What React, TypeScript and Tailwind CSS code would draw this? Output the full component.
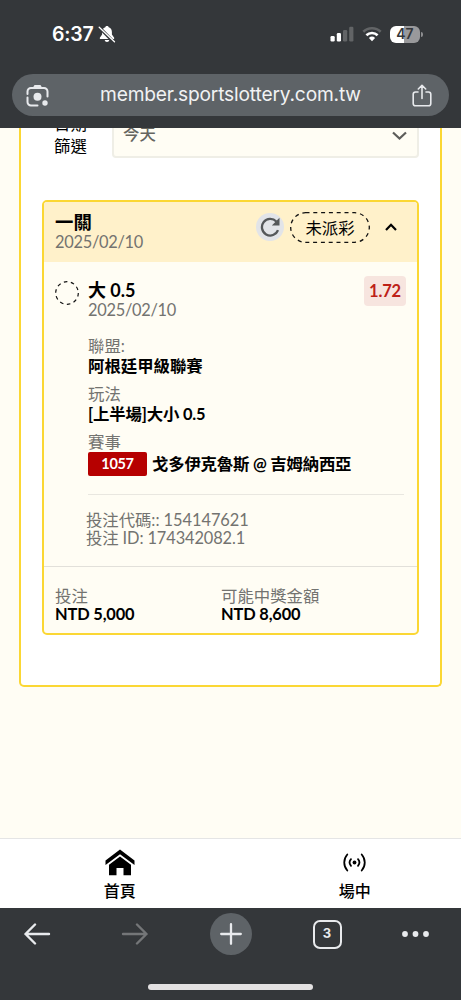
import type { ReactNode } from "react";

type DetailProps = {
  label: string;
  children: ReactNode;
};

function StatusBar() {
  return (
    <div className="flex h-[74px] items-start justify-between pl-[52px] pr-[38px] pt-[22px] text-white">
      <div className="flex h-6 items-center">
        <span className="w-[43px] whitespace-nowrap text-[19.5px] font-semibold leading-6 tracking-[-0.2px]">
          6:37
        </span>
        <svg className="ml-[3px] h-[18px] w-[18px]" viewBox="0 0 18 18">
          <path
            d="M9 1c-.9 0-1.500.5-1.700 1.200C5.100 2.900 4.100 4.700 4.100 7v2.500L2 12.500c-.5.8-.2 1.500.7 1.500h12.600c.9 0 1.200-.7.7-1.500L13.900 9.500V7c0-2.300-1-4.100-3.200-4.800C10.500 1.500 9.900 1 9 1ZM6.700 15h4.600c-.2 1.300-1.100 2-2.300 2s-2.100-.7-2.300-2Z"
            fill="currentColor"
          />
          <path d="M1.500 2.700 15.500 16.800" stroke="#34373a" strokeWidth="3.200" />
          <path d="m1.200 2.200 15.300 14.600" stroke="currentColor" strokeWidth="1.300" strokeLinecap="round" />
        </svg>
      </div>
      <div className="flex h-6 items-center">
        <svg className="h-4 w-6" viewBox="0 0 24 16" fill="#fff">
          <rect x="0.500" y="10" width="4.200" height="5.500" rx="1.200" />
          <rect x="6.800" y="7" width="4.200" height="8.500" rx="1.200" />
          <rect x="13" y="4" width="4.200" height="11.500" rx="1.200" fill="#626466" />
          <rect x="19.200" y="0.800" width="4.200" height="14.700" rx="1.200" fill="#626466" />
        </svg>
        <svg className="ml-2 h-4 w-5" viewBox="0 0 20 16" fill="none">
          <path d="M1.300 5.800a12.500 12.500 0 0 1 17.400 0" stroke="#626466" strokeWidth="2.600" />
          <path d="M4.400 9.200a8.200 8.200 0 0 1 11.200 0" stroke="#fff" strokeWidth="2.600" />
          <path d="M10 15.200 6.900 12a4.500 4.500 0 0 1 6.200 0Z" fill="#fff" />
        </svg>
        <div className="ml-[8px] flex h-[17px] w-[30px] items-center justify-center rounded-[6px] bg-linear-to-r from-white from-47% to-[#99999b] to-47% text-[14px] font-semibold leading-none text-[#34373a]">
          47
        </div>
        <span className="ml-px h-[5px] w-[2px] rounded-r-full bg-[#8d8e90]" />
      </div>
    </div>
  );
}

function AddressBar() {
  return (
    <div className="mx-3 flex h-[42px] items-center justify-between rounded-full bg-[#5e6367] pl-[14px] pr-[17px] text-[#e8eaed]">
      <svg className="h-[23px] w-[23px]" viewBox="0 0 23 23" fill="none" stroke="currentColor" strokeWidth="2">
        <path d="M1.500 10V7.500a3.500 3.500 0 0 1 3.500-3.500h13a3.500 3.500 0 0 1 3.500 3.500v5M1.500 13.500V18A3.500 3.500 0 0 0 5 21.500h6.500" strokeLinecap="round" />
        <path d="M7 3.500 8.500 1h6L16 3.500Z" fill="currentColor" stroke="none" />
        <circle cx="11.500" cy="12.800" r="4" fill="currentColor" stroke="none" />
        <circle cx="19" cy="19" r="2.700" fill="currentColor" stroke="none" />
      </svg>
      <span className="w-[261px] whitespace-nowrap text-[19.2px] leading-none tracking-[-0.18px] text-[#f1f2f3]">
        member.sportslottery.com.tw
      </span>
      <svg
        className="h-[23px] w-5"
        viewBox="0 0 20 23"
        fill="none"
        stroke="currentColor"
        strokeWidth="1.600"
        strokeLinecap="round"
        strokeLinejoin="round"
      >
        <path d="M6 8H3.500A2.300 2.300 0 0 0 1.200 10.300v9.200a2.300 2.300 0 0 0 2.300 2.300h13a2.300 2.300 0 0 0 2.300-2.300v-9.200A2.300 2.300 0 0 0 16.500 8H14M10 14.500V1.500M6.300 5 10 1.300 13.700 5" />
      </svg>
    </div>
  );
}

function Detail({ label, children }: DetailProps) {
  return (
    <div className="leading-5">
      <p className="text-[#737370]">{label}</p>
      <div className="font-bold">{children}</div>
    </div>
  );
}

function Amount({ label, value }: { label: string; value: string }) {
  return (
    <div className="w-[166px] leading-[18px]">
      <p className="text-[#737370]">{label}</p>
      <p className="font-bold tracking-[-0.15px]">{value}</p>
    </div>
  );
}

function BetCard() {
  return (
    <article className="mt-[42px] h-[435px] overflow-hidden rounded-[5px] border-2 border-[#fbd734] bg-[#fffdf4]">
      <header className="flex h-[60px] items-center bg-[#fff1ca] pl-[11px]">
        <div className="-mt-px w-[201px] leading-[19px]">
          <h2 className="text-[18.4px] font-bold">一關</h2>
          <p className="tracking-[-0.28px] text-[#737370]">2025/02/10</p>
        </div>
        <div className="-mt-[10px] flex items-center">
          <span className="flex h-7 w-7 items-center justify-center rounded-full bg-[#e2e4e8]">
            <svg className="h-5 w-5" viewBox="0 0 20 20">
              <path d="M16.300 4.500A8.300 8.300 0 1 0 18 13.200" fill="none" stroke="#55585a" strokeWidth="2.300" />
              <path d="M19.500.8v7.700h-7.700Z" fill="#55585a" />
            </svg>
          </span>
          <div className="relative ml-[6px] flex h-[31px] w-20 items-center justify-center">
            <svg className="absolute inset-0 h-full w-full" viewBox="0 0 80 31" fill="none">
              <rect x="0.700" y="0.700" width="78.600" height="29.600" rx="14.800" stroke="#111" strokeWidth="1.300" strokeDasharray="4 3.800" />
            </svg>
            <span className="pt-[2px]">未派彩</span>
          </div>
          <svg className="ml-[15px] h-2 w-3" viewBox="0 0 12 8" fill="none">
            <path d="M1 7 6 1.800 11 7" stroke="#000" strokeWidth="2.200" />
          </svg>
        </div>
      </header>

      <div className="flex items-start pl-[11px] pr-[13px] pt-[19px]">
        <svg className="h-6 w-6 shrink-0" viewBox="0 0 24 24" fill="none">
          <circle cx="12" cy="12" r="11.300" stroke="#111" strokeWidth="1.200" strokeDasharray="3.600 3.500" />
        </svg>
        <div className="ml-[9px] flex-1">
          <div className="flex h-[38px] justify-between">
            <div className="leading-[19px]">
              <h3 className="text-[18px] font-bold">大 0.5</h3>
              <p className="tracking-[-0.28px] text-[#737370]">2025/02/10</p>
            </div>
            <span className="-mr-[2px] -mt-[5px] flex h-[30px] w-[42px] items-center justify-center rounded-[4px] bg-[#f7e5df] text-[16.5px] font-bold tracking-[-0.2px] text-[#bd2118]">
              1.72
            </span>
          </div>
          <div className="mt-[17px] flex flex-col gap-2">
            <Detail label="聯盟:">阿根廷甲級聯賽</Detail>
            <Detail label="玩法">
              <span className="tracking-[-0.15px]">[上半場]大小 0.5</span>
            </Detail>
            <Detail label="賽事">
              <div className="flex h-6 items-center whitespace-nowrap">
                <span className="mr-[5px] flex h-6 w-[59px] items-center justify-center rounded-[2px] bg-[#b60000] pb-px text-[14.5px] tracking-[-0.3px] text-white">
                  1057
                </span>
                <span className="tracking-[-0.2px]">戈多伊克魯斯 @ 吉姆納西亞</span>
              </div>
            </Detail>
          </div>
          <div className="mt-[18px] h-px bg-[#e9e7e0]" />
          <div className="-ml-[2px] mt-4 leading-[18px] text-[#737370]">
            <p className="tracking-[-0.05px]">投注代碼:: 154147621</p>
            <p className="tracking-[-0.12px]">投注 ID: 174342082.1</p>
          </div>
        </div>
      </div>

      <footer className="mt-[19px] flex border-t border-[#e2e0da] pl-[11px] pt-5">
        <Amount label="投注" value="NTD 5,000" />
        <Amount label="可能中獎金額" value="NTD 8,600" />
      </footer>
    </article>
  );
}

function BrowserToolbar() {
  return (
    <div className="flex h-[92px] flex-col items-center bg-[#34373a] pt-[5px] font-['Inter',sans-serif] text-[#e8eaed]">
      <div className="flex h-[42px] w-full items-center justify-between pl-6 pr-8">
        <svg className="h-[22px] w-[27px]" viewBox="0 0 27 22" fill="none" stroke="currentColor" strokeWidth="2.400" strokeLinecap="round" strokeLinejoin="round">
          <path d="M25 11H1.500M11 1.500 1.500 11l9.500 9.500" />
        </svg>
        <svg className="ml-[22px] h-[22px] w-[27px]" viewBox="0 0 27 22" fill="none" stroke="#747678" strokeWidth="2.400" strokeLinecap="round" strokeLinejoin="round">
          <path d="M2 11h23.500M16 1.500l9.500 9.500-9.500 9.500" />
        </svg>
        <span className="ml-[15px] flex h-[42px] w-[42px] items-center justify-center rounded-full bg-[#5e6367]">
          <svg className="h-[22px] w-[22px]" viewBox="0 0 22 22" stroke="currentColor" strokeWidth="2.300" strokeLinecap="round">
            <path d="M11 1.200v19.600M1.200 11h19.600" />
          </svg>
        </span>
        <span className="ml-[13px] flex h-[29px] w-[29px] items-center justify-center rounded-[7px] border-2 border-current text-[13px] font-bold">
          3
        </span>
        <svg className="ml-[13px] h-[6px] w-[27px]" viewBox="0 0 27 6" fill="currentColor">
          <circle cx="3" cy="3" r="2.900" />
          <circle cx="13.500" cy="3" r="2.900" />
          <circle cx="24" cy="3" r="2.900" />
        </svg>
      </div>
      <div className="mt-[29px] h-[6px] w-[165px] rounded-full bg-[#e3e1e2]" />
    </div>
  );
}

export default function App() {
  return (
    <div className="flex h-[1000px] w-[461px] flex-col overflow-hidden bg-[#fffdf4] font-['Lato','Noto_Sans_CJK_TC',sans-serif] text-[16.4px] text-black">
      <div className="h-32 shrink-0 bg-[#34373a] font-['Inter',sans-serif]">
        <StatusBar />
        <AddressBar />
      </div>

      <main className="h-[710px] shrink-0 overflow-hidden">
        <section className="mx-[19px] h-[559px] rounded-b-[5px] border-2 border-t-0 border-[#fbd734] bg-white px-[21px]">
          <div className="flex h-[30px] items-end">
            <p className="mb-px ml-3 w-[35px] text-[16.4px] leading-[22px]">日期篩選</p>
            <div className="ml-[23px] flex h-[46px] flex-1 items-center justify-between rounded-[4px] border-2 border-[#efeee6] bg-[#fffdf4] pl-[9px] pr-[10px] text-[#656560]">
              <span className="-mt-[2px] font-medium">今天</span>
              <svg className="h-[9px] w-[15px]" viewBox="0 0 15 9" fill="none">
                <path d="m1 1.500 6.500 6 6.500-6" stroke="#5d5d5a" strokeWidth="2.200" />
              </svg>
            </div>
          </div>
          <BetCard />
        </section>
      </main>

      <nav className="grid h-[70px] shrink-0 grid-cols-2 border-t border-[#e5e5e5] bg-white px-[1px] text-[16px] font-medium">
        <div className="flex flex-col items-center pl-[8px] pt-[10px]">
          <svg className="h-[27px] w-[30px]" viewBox="0 0 30 27">
            <path d="M15 .5 29.500 11.500V16L15 5.200.5 16v-4.500Z" />
            <path d="m15 7.500 11 8.300v10.400h-7.500V19h-7v7.200H4V15.800Z" />
          </svg>
          <span className="mt-[3px] leading-6">首頁</span>
        </div>
        <div className="flex flex-col items-center pl-[19px] pt-[14px]">
          <svg className="h-[19px] w-[23px]" viewBox="0 0 23 19" fill="none" stroke="#000" strokeWidth="1.800" strokeLinecap="round">
            <circle cx="11.500" cy="9.500" r="1.900" fill="#000" stroke="none" />
            <path d="M8 6.200a5 5 0 0 0 0 6.600M15 6.200a5 5 0 0 1 0 6.600M4.300 1.500a12 12 0 0 0 0 16M18.700 1.500a12 12 0 0 1 0 16" />
          </svg>
          <span className="mt-[7px] leading-6">場中</span>
        </div>
      </nav>

      <BrowserToolbar />
    </div>
  );
}
